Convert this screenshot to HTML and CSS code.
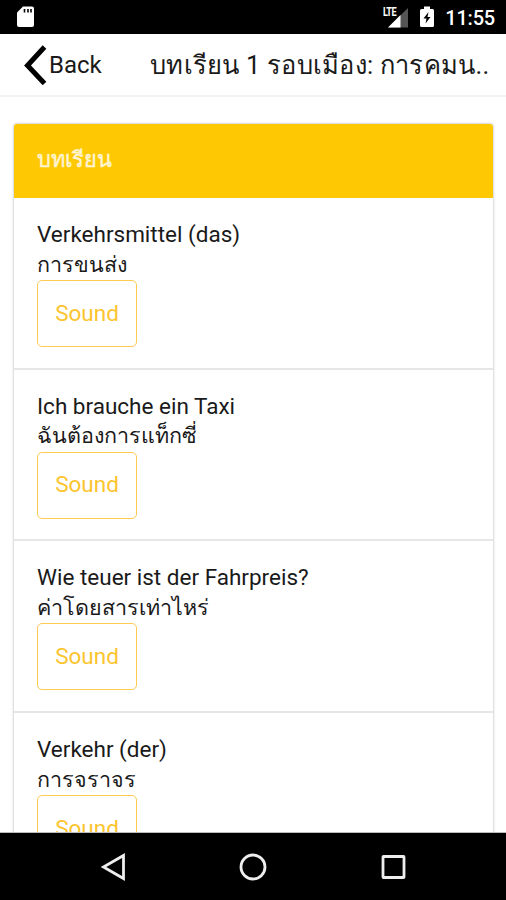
FILE: index.html
```
<!DOCTYPE html>
<html lang="th">
<head>
    <meta charset="UTF-8">
    <meta name="viewport" content="width=device-width, initial-scale=1.0">
    <title>บทเรียน 1</title>
    <link rel="stylesheet" href="styles.css">
</head>
<body>
    <!-- Status bar -->
    <div class="status-bar">
        <svg class="sd-icon" width="17" height="22" viewBox="0 0 17 22">
            <path d="M6 0.5H15Q17 0.5 17 2.5V19Q17 21 15 21H2Q0 21 0 19V6.500Z" fill="#fff"/>
            <path d="M7.500 3V6.500M11 3V6.500M14 3V6.500" stroke="#000" stroke-width="1.600"/>
        </svg>
        <div class="signal">
            <span class="lte">LTE</span>
            <svg width="20" height="22" viewBox="0 0 20 22">
                <path d="M20 2V21.500H0Z" fill="#555"/>
                <path d="M12.500 9V21.500H0Z" fill="#fff"/>
            </svg>
        </div>
        <svg class="battery" width="14" height="22" viewBox="0 0 14 22">
            <path d="M4 0.500H10V3H12.500Q14 3 14 4.500V19.500Q14 21 12.500 21H1.500Q0 21 0 19.500V4.500Q0 3 1.500 3H4Z" fill="#fff"/>
            <path d="M8.500 6L3.500 12.500H6.500L5.500 17.500L10.500 11H7.500Z" fill="#000"/>
        </svg>
        <span class="clock">11:55</span>
    </div>

    <!-- Navigation header -->
    <div class="header">
        <a class="back">
            <svg width="24" height="40" viewBox="0 0 24 40">
                <path d="M21.500 2L4.500 20.500L21.500 38.500" fill="none" stroke="#000" stroke-width="5"/>
            </svg>
            <span>Back</span>
        </a>
        <h1 class="title">บทเรียน 1 รอบเมือง: การคมน..</h1>
    </div>

    <div class="content">
        <div class="card">
            <div class="card-title">บทเรียน</div>
            <div class="item">
                <p class="german">Verkehrsmittel (das)</p>
                <p class="thai">การขนส่ง</p>
                <button class="sound">Sound</button>
            </div>
            <div class="item">
                <p class="german">Ich brauche ein Taxi</p>
                <p class="thai">ฉันต้องการแท็กซี่</p>
                <button class="sound">Sound</button>
            </div>
            <div class="item">
                <p class="german">Wie teuer ist der Fahrpreis?</p>
                <p class="thai">ค่าโดยสารเท่าไหร่</p>
                <button class="sound">Sound</button>
            </div>
            <div class="item">
                <p class="german">Verkehr (der)</p>
                <p class="thai">การจราจร</p>
                <button class="sound">Sound</button>
            </div>
        </div>
    </div>

    <!-- Android buttons -->
    <div class="nav-bar">
        <svg width="28" height="28" viewBox="0 0 28 28">
            <path d="M24.500 2.500V25.500L4.500 14Z"/>
        </svg>
        <svg width="28" height="28" viewBox="0 0 28 28">
            <circle cx="14" cy="14" r="12"/>
        </svg>
        <svg width="28" height="28" viewBox="0 0 28 28">
            <rect x="4" y="3.500" width="21" height="21" rx="0.500"/>
        </svg>
    </div>
</body>
</html>
```

FILE: styles.css
```
* {
    box-sizing: border-box;
}
body {
    margin: 0;
    height: 900px;
    display: flex;
    flex-direction: column;
    overflow: hidden;
    background: #fff;
    color: #1a1a1a;
    font-family: Roboto, sans-serif;
}
.status-bar {
    height: 34px;
    flex: none;
    display: flex;
    align-items: center;
    padding: 0 11px 0 17px;
    background: #000;
    color: #fff;
}
.signal {
    position: relative;
    height: 22px;
    margin-left: auto;
}
.lte {
    position: absolute;
    left: -5px;
    top: 1px;
    font-size: 13px;
    font-weight: 700;
    line-height: 10px;
    letter-spacing: -0.8px;
    transform: scaleX(0.7);
    transform-origin: left;
}
.battery {
    margin: 0 11px 0 12px;
}
.clock {
    font-size: 20px;
    font-weight: 500;
    letter-spacing: -0.2px;
    padding-top: 2px;
}
.header {
    height: 63px;
    flex: none;
    display: flex;
    align-items: center;
    border-bottom: 2px solid #f3f3f3;
}
.back {
    display: flex;
    align-items: center;
    width: 150px;
    padding-left: 23px;
    font-size: 24px;
}
.back span {
    margin-left: 2px;
}
.title {
    margin: 0;
    padding-top: 1px;
    font-size: 25.5px;
    font-weight: 400;
    letter-spacing: 0.25px;
    white-space: nowrap;
}
.content {
    flex: 1;
    min-height: 0;
    overflow: hidden;
    padding: 27px 13px 0 14px;
    border-bottom: 1px solid #bbb;
}
.card {
    border-radius: 3px;
    box-shadow: 0 0 2px 1px rgba(0, 0, 0, 0.16);
}
.card-title {
    height: 74px;
    padding-left: 23px;
    border-radius: 3px 3px 0 0;
    background: #fec803;
    color: #fff4cf;
    font-size: 21.8px;
    font-weight: 500;
    line-height: 72px;
    -webkit-text-stroke: 0.5px #fff4cf;
}
.item {
    height: 171.7px;
    padding: 22px 23px 0;
    border-bottom: 2px solid #e6e6e6;
}
.item p {
    height: 29.5px;
    margin: 0;
    font-size: 22.5px;
    line-height: 29.5px;
    white-space: nowrap;
}
.item .thai {
    font-size: 21.5px;
}
.sound {
    display: block;
    width: 100px;
    height: 67px;
    margin-top: 1px;
    padding: 0 0 2px;
    border: 1.5px solid #fdcb52;
    border-radius: 5px;
    background: #fff;
    color: #fcc42e;
    font-family: inherit;
    font-size: 22.5px;
}
.nav-bar {
    height: 67px;
    flex: none;
    display: flex;
    align-items: center;
    justify-content: center;
    gap: 112px;
    background: #000;
}
.nav-bar svg {
    fill: none;
    stroke: #eee;
    stroke-width: 2.8;
}
```
